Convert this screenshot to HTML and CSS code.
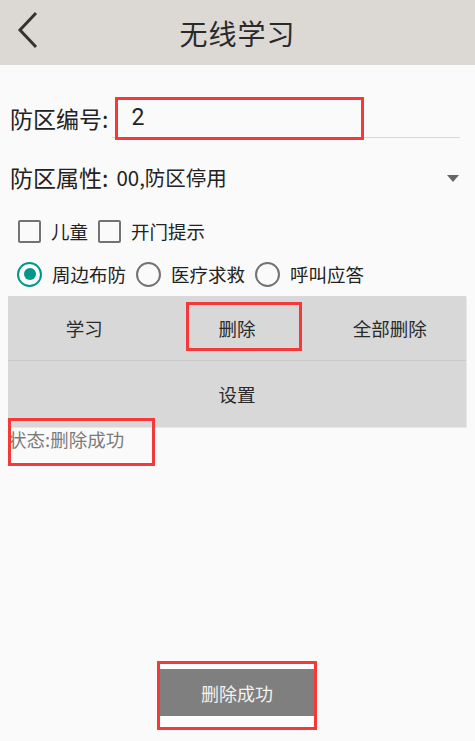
FILE: index.html
```html
<!DOCTYPE html>
<html lang="zh">
<head>
<meta charset="utf-8">
<link rel="stylesheet" href="styles.css">
</head>
<body>
<header class="topbar">
  <svg class="back" width="24" height="40" viewBox="0 0 24 40"><polyline points="19,3 3,20 19,37" fill="none" stroke="#333" stroke-width="3"/></svg>
  <h1 class="title">无线学习</h1>
</header>
<main class="content">
  <div class="row num-row">
    <span class="label">防区编号:</span>
    <div class="field"><span class="field-val">2</span></div>
    <div class="mark mark-num"></div>
  </div>
  <div class="row attr-row">
    <span class="label">防区属性:</span>
    <span class="attr-val">00,防区停用</span>
    <span class="caret"></span>
  </div>
  <div class="row check-row">
    <span class="box"></span><span class="opt">儿童</span>
    <span class="box"></span><span class="opt">开门提示</span>
  </div>
  <div class="row radio-row">
    <span class="radio on"></span><span class="opt">周边布防</span>
    <span class="radio"></span><span class="opt">医疗求救</span>
    <span class="radio"></span><span class="opt">呼叫应答</span>
  </div>
  <div class="btns">
    <div class="btn-row">
      <div class="btn">学习</div>
      <div class="btn">删除</div>
      <div class="btn">全部删除</div>
      <div class="mark mark-del"></div>
    </div>
    <div class="btn-row second">
      <div class="btn">设置</div>
    </div>
  </div>
  <div class="status">状态:删除成功<div class="mark mark-status"></div></div>
</main>
<div class="toast-mark"><div class="toast">删除成功</div></div>
</body>
</html>
```
FILE: styles.css
```css
html, body {
  margin: 0;
  padding: 0;
}
body {
  width: 475px;
  height: 741px;
  background: #fafafa;
  font-family: "Noto Sans CJK SC", "Noto Sans", sans-serif;
  color: #222;
  position: relative;
  overflow: hidden;
}
.topbar {
  height: 65px;
  background: #dcd9d4;
  display: flex;
  align-items: center;
  justify-content: center;
  position: relative;
}
.back {
  position: absolute;
  left: 17px;
  top: 10px;
}
.title {
  margin: 0;
  font-size: 28px;
  font-weight: normal;
  color: #2a2a2a;
  letter-spacing: 1px;
}
.content {
  padding: 0 8px;
}
.row {
  display: flex;
  align-items: center;
  position: relative;
}
.label {
  font-size: 23px;
  padding-left: 2px;
  color: #222;
}
.num-row {
  margin-top: 32px;
  height: 42px;
}
.field {
  flex: 1;
  margin-left: 4px;
  margin-right: 7px;
  height: 38px;
  border-bottom: 1px solid #d9d9d9;
  display: flex;
  align-items: center;
  padding-left: 19px;
}
.field-val {
  font-size: 23px;
  color: #222;
  font-family: "Roboto", "Noto Sans", sans-serif;
}
.mark {
  position: absolute;
  border: 3px solid #f5393b;
  box-sizing: border-box;
}
.mark-num {
  left: 107px;
  top: 0;
  width: 249px;
  height: 43px;
}
.attr-row {
  margin-top: 17px;
  height: 42px;
}
.attr-val {
  font-size: 20.5px;
  margin-left: 8px;
  flex: 1;
}
.caret {
  width: 0;
  height: 0;
  border-left: 6px solid transparent;
  border-right: 6px solid transparent;
  border-top: 7px solid #666;
  margin-right: 8px;
  margin-top: 2px;
}
.check-row {
  margin-top: 12px;
  height: 42px;
  padding-left: 10px;
}
.box {
  width: 19px;
  height: 19px;
  border: 2.5px solid #737373;
  border-radius: 2px;
}
.opt {
  font-size: 18.5px;
  margin-left: 10px;
  margin-right: 10px;
  color: #222;
}
.radio-row {
  margin-top: 1px;
  height: 42px;
  padding-left: 9px;
}
.radio {
  width: 21px;
  height: 21px;
  border: 2.5px solid #737373;
  border-radius: 50%;
  position: relative;
}
.radio.on {
  border-color: #00968a;
}
.radio.on::after {
  content: "";
  position: absolute;
  left: 4.5px;
  top: 4.5px;
  width: 12px;
  height: 12px;
  border-radius: 50%;
  background: #00968a;
}
.btns {
  margin-top: 1px;
  background: #d7d8d7;
  width: 458px;
  box-shadow: 1px 1px 0 #e8e8e8;
}
.btn-row {
  display: flex;
  height: 64px;
  position: relative;
  border-bottom: 1px solid #c9c9c9;
}
.btn-row.second {
  height: 66px;
  border-bottom: none;
}
.btn {
  flex: 1;
  display: flex;
  align-items: center;
  justify-content: center;
  font-size: 18.5px;
  color: #2a2a2a;
}
.mark-del {
  left: 178px;
  top: 6px;
  width: 116px;
  height: 49px;
}
.status {
  position: relative;
  font-size: 18.5px;
  color: #7a7a7a;
  height: 40px;
  line-height: 24px;
}
.mark-status {
  left: 0;
  top: -9px;
  width: 147px;
  height: 48px;
}
.toast-mark {
  position: absolute;
  left: 157px;
  top: 661px;
  width: 160px;
  height: 69px;
  border: 3px solid #f5393b;
  box-sizing: border-box;
  background: #fdfdfd;
  padding: 5px 0 0 0;
}
.toast {
  height: 47px;
  background: #7f7f7f;
  color: #f2f2f2;
  font-size: 18px;
  display: flex;
  align-items: center;
  justify-content: center;
}
```
